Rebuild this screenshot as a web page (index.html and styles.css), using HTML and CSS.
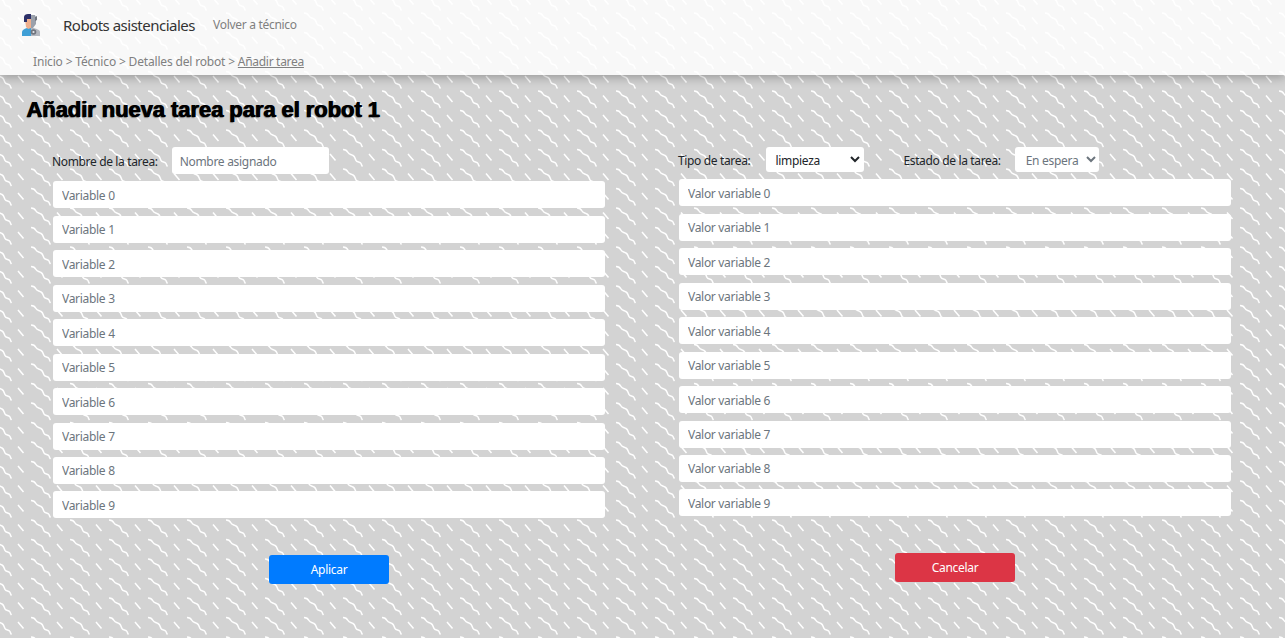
FILE: index.html
```html
<!DOCTYPE html>
<html lang="es">
<head>
    <meta charset="UTF-8">
    <meta name="viewport" content="width=device-width, initial-scale=1.0">
    <title>Robots asistenciales</title>
    <link rel="stylesheet" href="styles.css">
</head>
<body>
    <div class="page">
        <header class="navbar">
            <div class="nav-top">
                <svg class="logo" viewBox="0 0 18 22" width="18" height="22">
                    <path d="M0 22v-4c0-2 2-3 5-4h4v8z" fill="#3f9fd6"/>
                    <path d="M9 14h3c3 1 6 2 6 4v4H9z" fill="#b4b8c0"/>
                    <path d="M3 5h6v9l-3 1-2-2z" fill="#f0b08e"/>
                    <path d="M9 1h4l1 3v6l-3 4H9z" fill="#9ba1ab"/>
                    <path d="M2 8V3c0-2 2-3 4-3h3v5H5v3z" fill="#2c3068"/>
                    <path d="M13 3l2-1v4l-2 1z" fill="#70757f"/>
                    <circle cx="11.500" cy="18" r="2.800" fill="#6f747e"/>
                    <circle cx="11.500" cy="18" r="1.100" fill="#e3e5e8"/>
                </svg>
                <a class="brand" href="#">Robots asistenciales</a>
                <a class="nav-link" href="#">Volver a técnico</a>
            </div>
            <nav class="crumbs">Inicio &gt; Técnico &gt; Detalles del robot &gt; <a href="#">Añadir tarea</a></nav>
        </header>

        <main>
            <h1>Añadir nueva tarea para el robot 1</h1>
            <form class="columns">
                <section class="col">
                    <div class="head-row">
                        <label for="nombre">Nombre de la tarea:</label>
                        <input class="name-input" type="text" id="nombre" placeholder="Nombre asignado">
                    </div>
                    <div class="vars">
                        <input type="text" placeholder="Variable 0">
                        <input type="text" placeholder="Variable 1">
                        <input type="text" placeholder="Variable 2">
                        <input type="text" placeholder="Variable 3">
                        <input type="text" placeholder="Variable 4">
                        <input type="text" placeholder="Variable 5">
                        <input type="text" placeholder="Variable 6">
                        <input type="text" placeholder="Variable 7">
                        <input type="text" placeholder="Variable 8">
                        <input type="text" placeholder="Variable 9">
                    </div>
                    <button class="btn btn-blue" type="submit">Aplicar</button>
                </section>

                <section class="col col-right">
                    <div class="head-row">
                        <label for="tipo">Tipo de tarea:</label>
                        <select id="tipo" class="type-select"><option>limpieza</option></select>
                        <label class="state-label" for="estado">Estado de la tarea:</label>
                        <select id="estado" class="state-select" disabled><option>En espera</option></select>
                    </div>
                    <div class="vars">
                        <input type="text" placeholder="Valor variable 0">
                        <input type="text" placeholder="Valor variable 1">
                        <input type="text" placeholder="Valor variable 2">
                        <input type="text" placeholder="Valor variable 3">
                        <input type="text" placeholder="Valor variable 4">
                        <input type="text" placeholder="Valor variable 5">
                        <input type="text" placeholder="Valor variable 6">
                        <input type="text" placeholder="Valor variable 7">
                        <input type="text" placeholder="Valor variable 8">
                        <input type="text" placeholder="Valor variable 9">
                    </div>
                    <button class="btn btn-red" type="button">Cancelar</button>
                </section>
            </form>
        </main>
    </div>
</body>
</html>
```

FILE: styles.css
```css
html, body {
    margin: 0;
    background: #ffffff;
}
body {
    font-family: "Noto Sans", sans-serif;
    color: #212529;
}
.page {
    height: 638px;
    overflow: hidden;
    background-color: #d3d3d3;
    background-image: url("data:image/svg+xml,%3Csvg xmlns='http://www.w3.org/2000/svg' width='39' height='39'%3E%3Cg fill='none' stroke='%23fff' stroke-width='1.500'%3E%3Cpath d='M0 1C3 1 4 2 5 4 6 6 8 6 10 7 12 8 12 10 13 12 14 14 17 13 18 15 18.500 16 18.500 17 19.500 18'/%3E%3Cpath d='M0 20.500C3 20.500 4 21.500 5 23.500 6 25.500 8 25.500 10 26.500 12 27.500 12 29.500 13 31.500 14 33.500 17 32.500 18 34.500 18.500 35.500 18.500 36.500 19.500 37.500'/%3E%3Cpath d='M26 5.500l5.500 6.500M26 25l5.500 6.500'/%3E%3C/g%3E%3C/svg%3E");
    background-size: 39px 39px;
    background-position: 31px 12px;
}
.navbar {
    height: 75px;
    background: rgba(255, 255, 255, 0.84);
    box-shadow: 0 2px 10px rgba(0, 0, 0, 0.3);
    position: relative;
}
.nav-top {
    display: flex;
    align-items: center;
    height: 49px;
    padding-left: 22px;
}
.logo {
    margin-right: 23px;
}
.brand {
    font-size: 15px;
    letter-spacing: -0.5px;
    color: #333333;
    text-decoration: none;
    margin-right: 18px;
}
.nav-link {
    font-size: 12px;
    letter-spacing: -0.3px;
    color: #808080;
    text-decoration: none;
}
.crumbs {
    padding: 1px 0 0 33px;
    font-size: 12px;
    letter-spacing: -0.17px;
    line-height: 24px;
    color: #808080;
}
.crumbs a {
    color: #808080;
    letter-spacing: -0.3px;
}
h1 {
    margin: 0;
    padding: 21px 0 0 26px;
    height: 51px;
    font-family: "Liberation Sans", Arial, sans-serif;
    font-size: 22px;
    line-height: 28px;
    letter-spacing: -0.07px;
    color: #000000;
    text-shadow: 1px 0 0 #000, 0 1px 1px rgba(0, 0, 0, 0.4);
}
.columns {
    display: grid;
    grid-template-columns: 626px 626px;
    padding-left: 16px;
}
.col {
    padding: 0 37px;
    display: flex;
    flex-direction: column;
    align-items: center;
}
.head-row {
    align-self: stretch;
    display: flex;
    align-items: center;
    height: 27px;
    margin: 0 0 7.45px -1px;
    font-size: 12px;
}
.col-right .head-row {
    height: 25px;
}
label {
    letter-spacing: -0.35px;
    padding-top: 2px;
}
input, select {
    box-sizing: border-box;
    border: none;
    border-radius: 3px;
    background-color: #ffffff;
    font-family: "Noto Sans", sans-serif;
    font-size: 12px;
    letter-spacing: -0.3px;
    outline: none;
}
input::placeholder {
    color: #6c757d;
    opacity: 1;
}
.name-input {
    width: 157px;
    height: 27px;
    margin-left: 14px;
    padding: 2px 8px 0;
}
.vars {
    align-self: stretch;
    display: flex;
    flex-direction: column;
    gap: 7.45px;
}
.vars input {
    height: 27px;
    padding: 1px 9px 0;
}
select {
    appearance: none;
    height: 25px;
    padding-top: 2px;
    background-repeat: no-repeat;
}
.type-select {
    width: 98px;
    margin-left: 16px;
    padding-left: 9px;
    color: #212529;
    background-image: url("data:image/svg+xml,%3Csvg xmlns='http://www.w3.org/2000/svg' width='10' height='7'%3E%3Cpath d='M1 1l4 4 4-4' fill='none' stroke='%23212529' stroke-width='2'/%3E%3C/svg%3E");
    background-position: right 4px center;
}
.state-label {
    margin-left: 39px;
}
.state-select {
    width: 84px;
    margin-left: 14px;
    padding-left: 11px;
    color: #6c757d;
    opacity: 1;
    background-image: url("data:image/svg+xml,%3Csvg xmlns='http://www.w3.org/2000/svg' width='10' height='7'%3E%3Cpath d='M1 1l4 4 4-4' fill='none' stroke='%236c757d' stroke-width='2'/%3E%3C/svg%3E");
    background-position: right 3px center;
}
.btn {
    width: 120px;
    height: 29px;
    margin-top: 36.5px;
    padding-top: 2px;
    border: none;
    border-radius: 3px;
    color: #ffffff;
    font-family: "Noto Sans", sans-serif;
    font-size: 12px;
    letter-spacing: -0.3px;
}
.btn-blue {
    background: #007bff;
}
.btn-red {
    background: #dc3545;
}
```
